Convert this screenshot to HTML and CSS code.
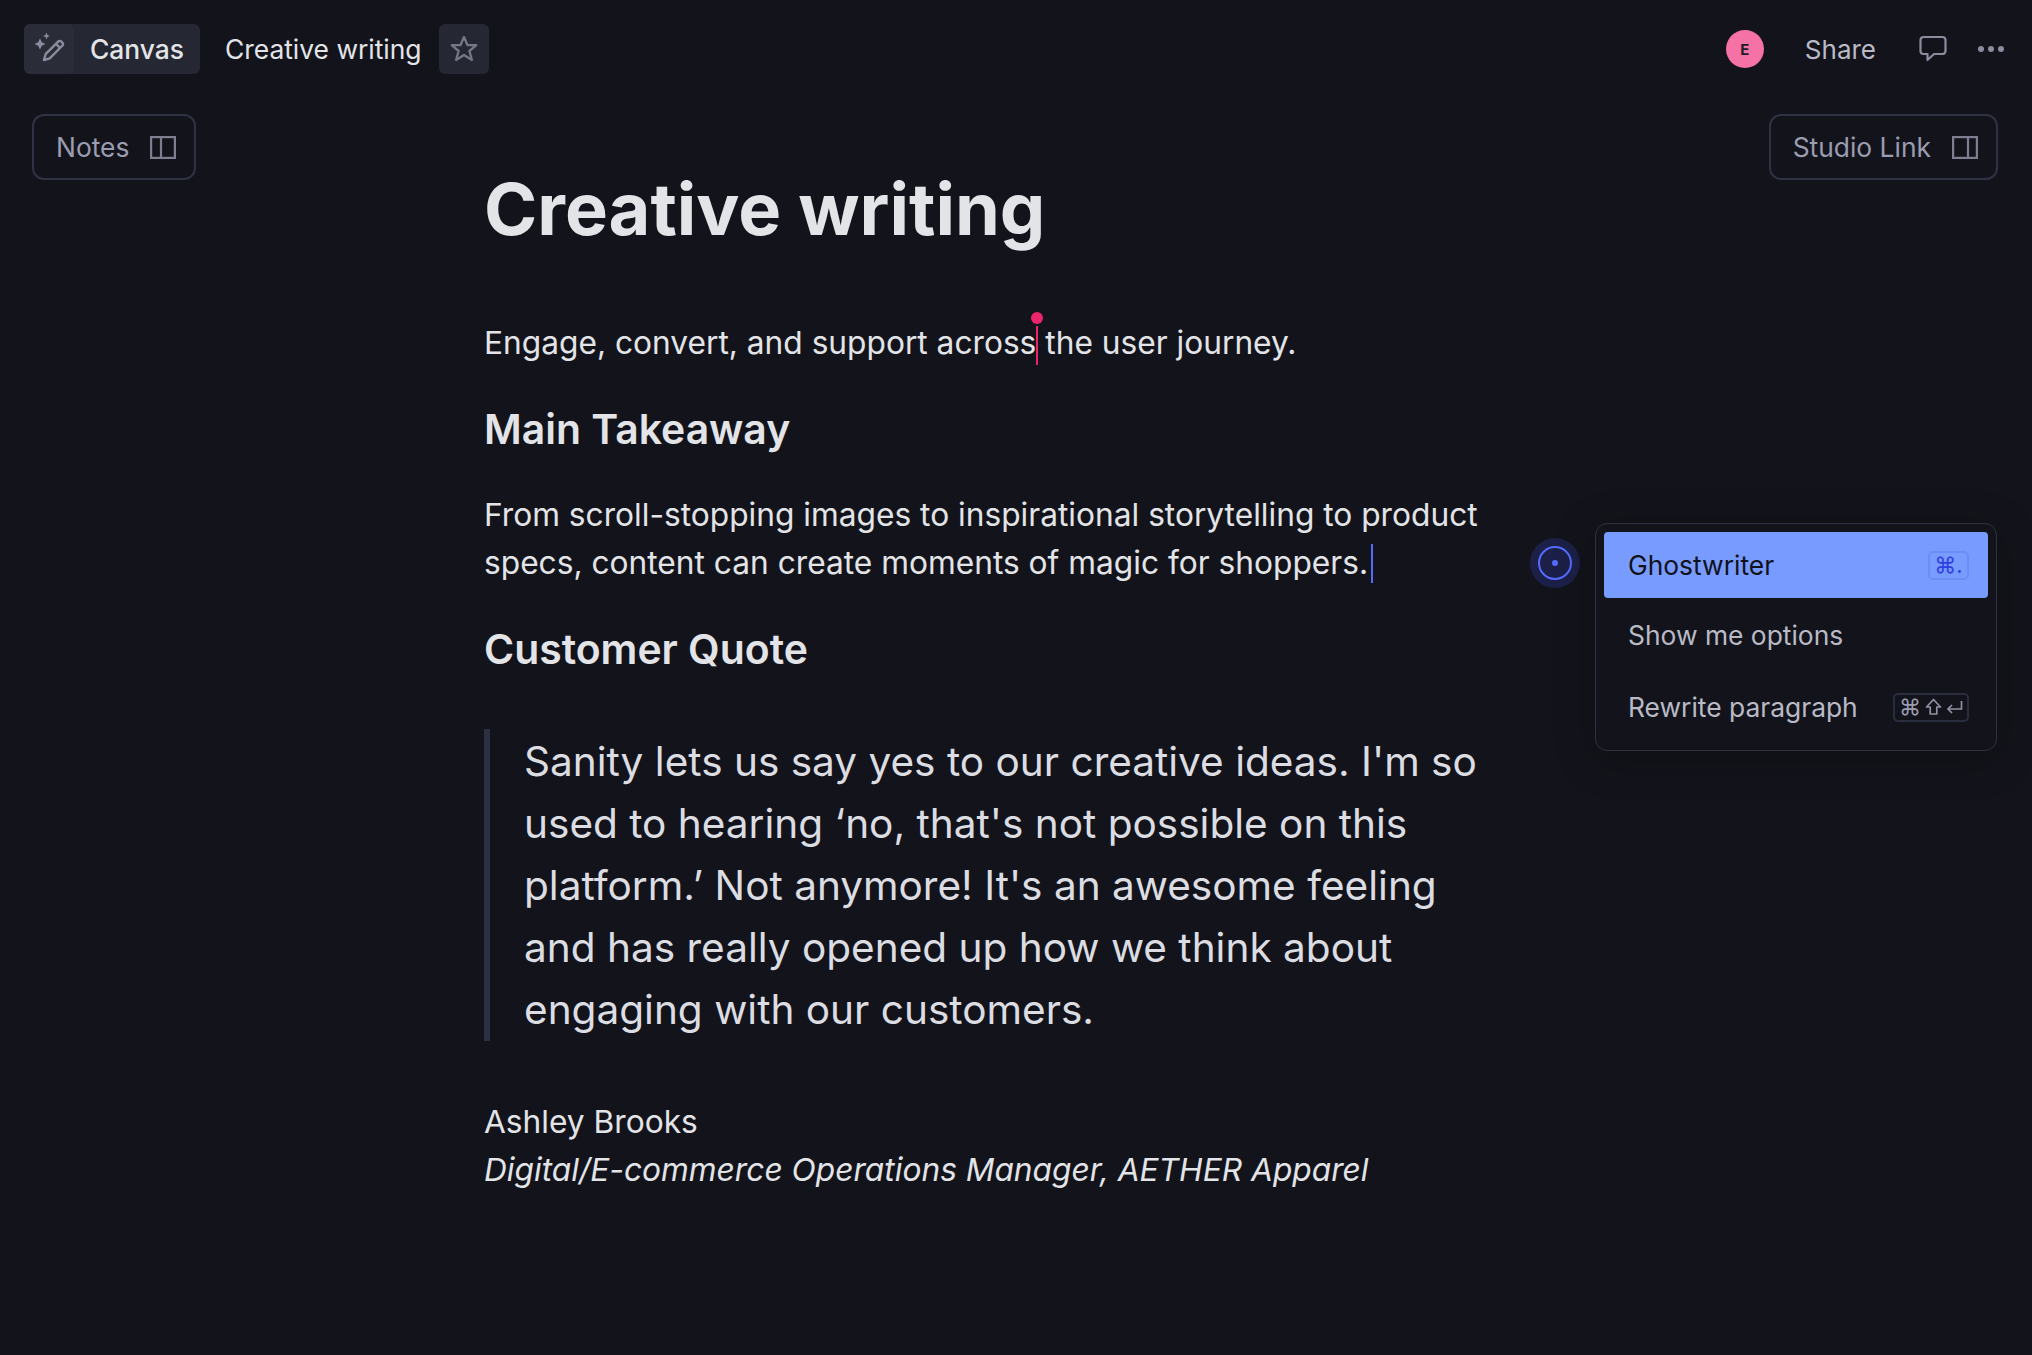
FILE: index.html
```html
<!DOCTYPE html>
<html lang="en">
<head>
<meta charset="utf-8">
<title>Creative writing</title>
<link rel="stylesheet" href="styles.css">
</head>
<body>
<header class="topbar">
  <div class="crumbs">
    <div class="pill">
      <span class="pill-icon">
        <svg width="34" height="34" viewBox="0 0 34 34" fill="none" stroke="#8b8d9e" stroke-width="2.4">
          <path d="M12 28l1.6-5.8L26.4 9.4a1.9 1.9 0 0 1 2.7 0l1.4 1.4a1.9 1.9 0 0 1 0 2.7L17.7 26.3z" stroke-linejoin="round"/>
          <path d="M24 11.8l4.2 4.2"/>
          <path d="M8 5.5l1.8 3.7 3.7 1.8-3.7 1.8L8 16.5l-1.8-3.7L2.5 11l3.7-1.8z" fill="#8b8d9e" stroke="none" transform="translate(0 1)"/>
          <path d="M14.5 0.5l1 2.5 2.5 1-2.5 1-1 2.5-1-2.5-2.5-1 2.5-1z" fill="#8b8d9e" stroke="none"/>
        </svg>
      </span>
      <span class="pill-label">Canvas</span>
    </div>
    <span class="doc-name">Creative writing</span>
    <button class="star" type="button" aria-label="Favourite">
      <svg width="30" height="30" viewBox="0 0 30 30" fill="none" stroke="#757789" stroke-width="2.3" stroke-linejoin="round"><path d="M15 3l3.6 8.2h8.7l-6.9 5.8 2.5 9L15 21l-7.9 5 2.5-9-6.9-5.8h8.7z"/></svg>
    </button>
  </div>
  <div class="actions">
    <span class="avatar">E</span>
    <span class="share">Share</span>
    <svg class="comment" width="28" height="28" viewBox="0 0 28 28" fill="none" stroke="#8b8d9e" stroke-width="2.2" stroke-linejoin="round"><path d="M4.5 2h19a3 3 0 0 1 3 3v11a3 3 0 0 1-3 3H15l-6.5 6v-6h-4a3 3 0 0 1-3-3V5a3 3 0 0 1 3-3z"/></svg>
    <span class="dots"><i></i><i></i><i></i></span>
  </div>
</header>

<main class="workspace">
  <div class="side side-left">
    <button class="panel-btn" type="button">Notes
      <svg width="26" height="23" viewBox="0 0 26 23" fill="none" stroke="#7d7f91" stroke-width="2.2"><rect x="1.1" y="1.1" width="23.8" height="20.8"/><path d="M11 1.1v20.8"/></svg>
    </button>
  </div>
  <article class="doc">
    <h1>Creative writing</h1>
    <p class="intro">Engage, convert, and support across<span class="caret-pink"></span> the user journey.</p>
    <h2>Main Takeaway</h2>
    <p>From scroll-stopping images to inspirational storytelling to product specs, content can create moments of magic for shoppers.<span class="caret-blue"></span></p>
    <h2 class="quote-head">Customer Quote</h2>
    <blockquote>Sanity lets us say yes to our creative ideas. I'm so used to hearing ‘no, that's not possible on this platform.’ Not anymore! It's an awesome feeling and has really opened up how we think about engaging with our customers.</blockquote>
    <p class="cite">Ashley Brooks<br><em>Digital/E-commerce Operations Manager, AETHER Apparel</em></p>
  </article>
  <div class="side side-right">
    <button class="panel-btn" type="button">Studio Link
      <svg width="26" height="23" viewBox="0 0 26 23" fill="none" stroke="#7d7f91" stroke-width="2.2"><rect x="1.1" y="1.1" width="23.8" height="20.8"/><path d="M16 1.1v20.8"/></svg>
    </button>
  </div>
</main>

<span class="ai-dot"><i></i></span>
<div class="menu">
  <div class="item active"><span>Ghostwriter</span><kbd class="key key-active">⌘.</kbd></div>
  <div class="item item-tall"><span>Show me options</span></div>
  <div class="item"><span>Rewrite paragraph</span>
    <kbd class="key">⌘<svg width="17" height="18" viewBox="0 0 17 18" fill="none" stroke="#8f91a3" stroke-width="1.7" stroke-linejoin="round"><path d="M8.5 1.5L15.5 9h-3.7v7H5.2V9H1.5z"/></svg><svg width="17" height="18" viewBox="0 0 17 18" fill="none" stroke="#8f91a3" stroke-width="1.7"><path d="M15.5 3v8H2"/><path d="M6 7l-4 4 4 4"/></svg></kbd>
  </div>
</div>
</body>
</html>
```
FILE: styles.css
```css
* { box-sizing: border-box; }
html, body { height: 100%; }
body {
  margin: 0;
  background: #13141b;
  color: #e3e4e8;
  font-family: Inter, "Liberation Sans", sans-serif;
  overflow: hidden;
}
button { font-family: inherit; }

.topbar {
  display: flex;
  justify-content: space-between;
  align-items: center;
  height: 50px;
  margin: 24px 28px 0 24px;
}
.crumbs { display: flex; align-items: center; }
.pill {
  display: flex;
  align-items: center;
  height: 50px;
  width: 176px;
  background: #252732;
  border-radius: 6px;
  color: #e3e4e8;
  font-size: 26.4px;
  font-weight: 500;
}
.pill-icon {
  display: flex;
  align-items: center;
  justify-content: center;
  width: 50px;
  height: 50px;
  background: #2a2c38;
  border-radius: 6px;
}
.pill-label { margin-left: 16px; }
.doc-name { margin-left: 25px; font-size: 26.4px; color: #e3e4e8; }
.star {
  display: flex;
  align-items: center;
  justify-content: center;
  width: 50px;
  height: 50px;
  margin-left: 17px;
  padding: 0;
  border: 0;
  border-radius: 6px;
  background: #252732;
}
.actions { display: flex; align-items: center; }
.avatar {
  display: flex;
  align-items: center;
  justify-content: center;
  width: 38px;
  height: 38px;
  border-radius: 50%;
  background: #f472a6;
  color: #1b1c25;
  font-size: 15px;
  font-weight: 700;
}
.share { margin-left: 41px; font-size: 26px; color: #b9bac6; }
.comment { margin-left: 43px; }
.dots { display: flex; gap: 4px; margin-left: 31px; }
.dots i { width: 6px; height: 6px; border-radius: 50%; background: #8b8d9e; }

.workspace {
  display: grid;
  grid-template-columns: 484px 1000px 1fr;
  margin-top: 40px;
}
.side { display: flex; align-items: flex-start; }
.side-left { padding-left: 32px; }
.side-right { justify-content: flex-end; padding-right: 34px; }
.panel-btn {
  display: flex;
  align-items: center;
  gap: 21px;
  height: 66px;
  padding: 0 18px 0 22px;
  background: transparent;
  border: 2px solid #2f3243;
  border-radius: 12px;
  color: #9a9cb0;
  font-size: 26.4px;
}

.doc { font-size: 31.7px; line-height: 48px; }
.doc h1 {
  margin: 55px 0 0;
  font-size: 72.1px;
  line-height: 80px;
  font-weight: 700;
}
.doc p { margin: 0; color: #e3e4e8; }
.doc .intro { margin-top: 70px; }
.doc h2 {
  margin: 38px 0;
  font-size: 40.9px;
  line-height: 48px;
  font-weight: 600;
}
.doc .quote-head { margin-bottom: 56px; }
.caret-pink {
  display: inline-block;
  position: relative;
  width: 2px;
  height: 39px;
  margin-right: -2px;
  vertical-align: -11px;
  background: #e9256b;
}
.caret-pink::before {
  content: "";
  position: absolute;
  top: -14px;
  left: -5px;
  width: 12px;
  height: 12px;
  border-radius: 50%;
  background: #e9256b;
}
.caret-blue {
  display: inline-block;
  width: 2px;
  height: 39px;
  margin-left: 3px;
  vertical-align: -9px;
  background: #556bfc;
}
.doc blockquote {
  margin: 0;
  padding: 2px 0 0 34px;
  border-left: 6px solid #2d3042;
  font-size: 40.56px;
  line-height: 62px;
  color: #dcdde2;
}
.doc .cite { margin-top: 57px; }

.ai-dot {
  position: absolute;
  left: 1530px;
  top: 538px;
  display: flex;
  align-items: center;
  justify-content: center;
  width: 50px;
  height: 50px;
  border-radius: 50%;
  background: #1c2048;
}
.ai-dot::before {
  content: "";
  position: absolute;
  inset: 8px;
  border: 2.5px solid #556bfc;
  border-radius: 50%;
}
.ai-dot i { width: 6px; height: 6px; border-radius: 50%; background: #556bfc; }

.menu {
  position: absolute;
  left: 1595px;
  top: 523px;
  width: 402px;
  height: 228px;
  padding: 8px;
  background: #13141b;
  border: 1px solid #2f3140;
  border-radius: 12px;
  box-shadow: 0 8px 40px rgba(0, 0, 0, 0.25);
}
.item {
  display: flex;
  align-items: center;
  justify-content: space-between;
  height: 72px;
  padding: 0 19px 0 24px;
  border-radius: 4px;
  font-size: 26.4px;
  color: #b9bac6;
}
.item.item-tall { height: 73px; }
.item.active { height: 66px; background: #789bff; color: #10121a; }
.key {
  display: inline-flex;
  align-items: center;
  justify-content: center;
  gap: 4px;
  width: 76px;
  height: 29px;
  border: 2px solid #2a2d3d;
  border-radius: 5px;
  font-family: Inter, sans-serif;
  font-size: 22px;
  color: #9a9cb0;
}
.key-active {
  width: 41px;
  border-color: #6c8cf8;
  color: #2f3fe0;
  gap: 0;
}
```
